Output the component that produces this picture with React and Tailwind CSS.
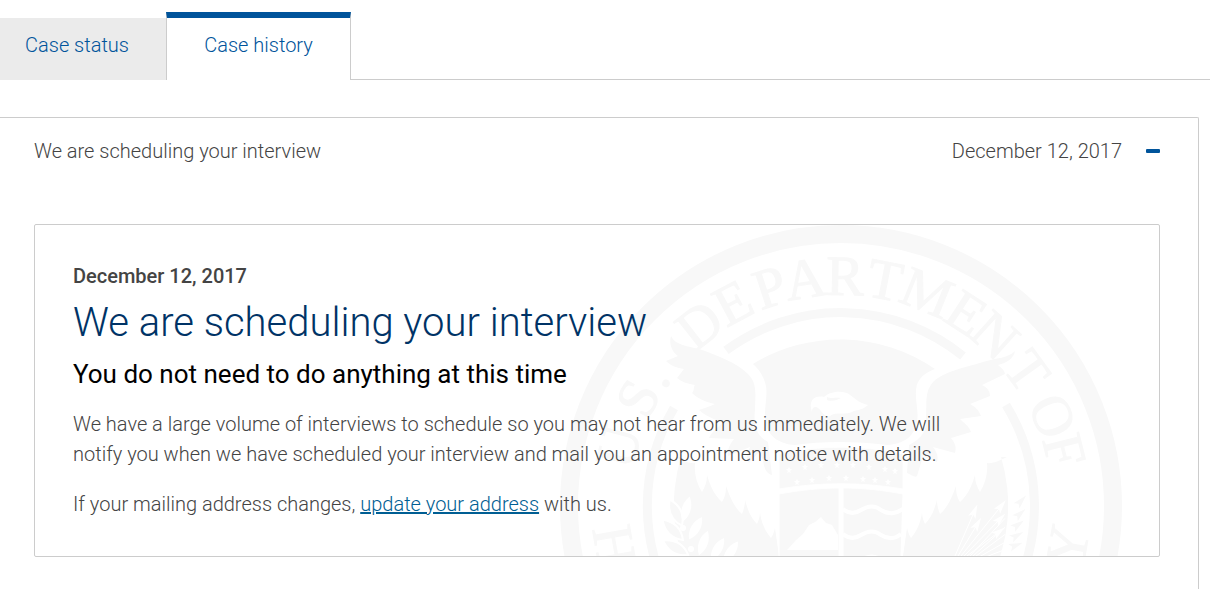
import React, { useState } from "react";

const tabs = ["Case status", "Case history"];

// letters around the rim, with the angle from the top
const topLetters = [
  ["U", -75],
  ["S", -62],
  [".", -55],
  ["D", -38],
  ["E", -28],
  ["P", -18],
  ["A", -9],
  ["R", 1],
  ["T", 11],
  ["M", 22],
  ["E", 33],
  ["N", 42],
  ["T", 54],
  ["O", 67],
  ["F", 76],
];

// these are read from the inside of the rim
const bottomLetters = [
  ["H", 80],
  ["Y", -80],
];

const stars = [
  [-52, -36], [-36, -39], [-20, -41], [-4, -41], [12, -41], [28, -39], [44, -37], [54, -35],
  [-44, -24], [-29, -26], [-12, -28], [5, -28], [22, -27], [34, -26], [47, -24],
];

const outerLeaves = [
  [-165, 7, -25],
  [-168, 24, -45],
  [-165, 42, -60],
];

const innerLeaves = [
  [-155, 4, 15],
  [-146, 23, 30],
  [-138, 38, 20],
  [-124, 44, 30],
  [-111, 47, 35],
];

const arrows = [
  [114, 50, 134, 4],
  [117, 50, 137, 17],
  [120, 50, 161, -1],
  [123, 50, 160, 12],
  [126, 50, 159, 25],
  [129, 50, 181, -6],
  [132, 50, 180, 7],
  [135, 50, 178, 18],
  [138, 51, 177, 29],
  [142, 52, 176, 39],
];

const lowerWing =
  "M-166 -49C-160 -46 -152 -42 -146 -43C-147 -32 -144 -22 -139 -14C-136 -19 -134 -24 -134 -31C-131 -20 -126 -10 -119 -4C-116 -9 -115 -13 -115 -20C-111 -9 -107 1 -99 8C-97 3 -96 -1 -96 -6C-93 5 -90 12 -84 18C-82 14 -81 10 -81 6C-80 16 -76 25 -70 32C-68 29 -67 26 -66 22L-62 50L-55 80V157A167 167 0 0 1 -160 -49Z";

function Seal() {
  return (
    <svg
      className="absolute top-0 right-[37px] w-[562px] h-[562px]"
      viewBox="-281 -281 562 562"
      fill="#f8f8f8"
      aria-hidden="true"
    >
      <circle r="272" fill="none" stroke="#f8f8f8" strokeWidth="18" />

      <g fontFamily="Liberation Serif, serif" fontSize="57" textAnchor="middle" stroke="#f8f8f8">
        {topLetters.map(([letter, angle]) => (
          <text key={angle} y="-211" transform={`rotate(${angle})`}>{letter}</text>
        ))}
        {bottomLetters.map(([letter, angle]) => (
          <text key={angle} y="249" transform={`rotate(${angle})`}>{letter}</text>
        ))}
      </g>

      {/* Inner ring, open where the wings pass */}
      <g fill="none" stroke="#f8f8f8" strokeWidth="9">
        <path d="M-115 -155.6A193.5 193.5 0 0 1 122 -150" />
        <path d="M-167 -98A193.5 193.5 0 0 0 0 193.5A193.5 193.5 0 0 0 165 -101" />
      </g>

      {/* Sky behind the head */}
      <path d="M-88 -142A167 167 0 0 1 94 -137C84 -133 76 -128 75 -116C74 -103 79 -92 75 -80C71 -67 60 -62 46 -61C16 -65 -20 -65 -46 -61C-60 -62 -72 -68 -75 -82C-78 -96 -73 -108 -75 -120C-77 -129 -82 -137 -88 -142Z" />

      {/* Head */}
      <path
        fill="#fff"
        d="M-29 -94C-33 -105 -27 -111 -17 -109C-13 -113 -4 -116 6 -113C13 -109 17 -103 27 -101C23 -97 17 -96 13 -95C5 -90 -5 -95 -11 -90C-18 -88 -20 -98 -25 -99C-28 -99 -29 -97 -29 -94Z"
      />
      <path d="M-14 -109C-9 -107 -5 -109 0 -108C-4 -106 -9 -104 -14 -106Z" />

      {/* Wings */}
      <path d="M-170 -170C-166 -161 -154 -160 -142 -157C-124 -151 -104 -143 -93 -132C-83 -122 -86 -110 -86 -96C-88 -80 -84 -70 -73 -64L-69 -31C-74 -32 -77 -37 -78 -46L-82 -54L-92 -43C-96 -49 -93 -54 -91 -59L-113 -50C-114 -58 -110 -63 -107 -67L-132 -68C-129 -75 -122 -79 -118 -84C-126 -86 -135 -90 -142 -96C-136 -98 -130 -100 -126 -102C-135 -104 -143 -107 -149 -113C-146 -116 -148 -119 -146 -121C-153 -122 -159 -124 -164 -128L-157 -137C-164 -138 -170 -140 -175 -145C-171 -147 -167 -148 -163 -150C-170 -155 -172 -163 -170 -170Z" />
      <path d="M174 -155C168 -148 155 -148 142 -144C122 -138 102 -134 92 -124C83 -114 86 -101 85 -89C86 -76 82 -68 68 -61L66 -33C71 -31 74 -28 76 -30L82 -50L96 -44C98 -50 95 -55 92 -59L114 -53C116 -60 113 -64 110 -68L130 -74C128 -80 123 -83 119 -87L140 -90C138 -96 133 -100 129 -102L149 -110C149 -116 145 -119 141 -121L164 -132C163 -137 159 -139 157 -141C166 -143 173 -148 174 -155Z" />

      {/* Lower half of the disc, cut by the feathers */}
      <path d={lowerWing} />
      <path d={lowerWing} transform="scale(-1 1)" />

      {/* Olive branch */}
      {outerLeaves.map(([x, y, angle]) => (
        <path
          key={`${x},${y}`}
          d="M0 14C-7 5 -7 -5 0 -15C7 -5 7 5 0 14Z"
          stroke="#fff"
          strokeWidth="2"
          transform={`translate(${x} ${y}) rotate(${angle})`}
        />
      ))}
      {innerLeaves.map(([x, y, angle]) => (
        <path
          key={`${x},${y}`}
          d="M0 12C-6 4 -6 -6 0 -14C6 -6 6 4 0 12Z"
          fill="#fff"
          transform={`translate(${x} ${y}) rotate(${angle})`}
        />
      ))}
      <g fill="#fff">
        <circle cx="-158" cy="22" r="3" />
        <circle cx="-150" cy="43" r="3" />
      </g>

      {/* Arrows, grey where they leave the disc */}
      {arrows.map(([x1, y1, x2, y2]) => (
        <g key={`${x2},${y2}`}>
          <line x1={x1} y1={y1} x2={Math.min(x2, 164)} y2={y2 + ((x2 - Math.min(x2, 164)) * (y1 - y2)) / (x2 - x1)} stroke="#fff" />
          <path
            d="M0 -6L4 8L0 5L-4 8Z"
            fill={x2 > 166 ? "#f8f8f8" : "#fff"}
            transform={`translate(${x2} ${y2}) rotate(${(Math.atan2(x2 - x1, y1 - y2) * 180) / Math.PI})`}
          />
        </g>
      ))}

      {/* Shield */}
      <path
        d="M-62 -52C-22 -61 22 -61 62 -52V-17C22 -24 -22 -24 -62 -17ZM-62 -12C-40 -16 -20 -18 -2 -18V120C-40 105 -60 80 -62 50ZM2 -18C22 -18 40 -16 62 -12L60 50C58 80 40 105 2 120Z"
        stroke="#fff"
        strokeWidth="1"
      />
      <g fill="#fff">
        {stars.map(([x, y]) => (
          <path
            key={`${x},${y}`}
            d="M0 -3L1 -1L3 -1L1 1L2 3L0 2L-2 3L-1 1L-3 -1L-1 -1Z"
            transform={`translate(${x} ${y})`}
          />
        ))}
        <path d="M-54 44L-45 34L-38 28L-32 19L-26 16L-20 11L-15 17L-9 19L-3 29V44Z" />
      </g>
      <g fill="none" stroke="#fff" strokeWidth="4">
        <path d="M2 3C8 8 14 8 20 4C28 -1 34 -1 40 4C48 9 54 8 62 3" />
        <path d="M2 28C8 33 14 33 20 29C28 24 34 24 40 29C48 34 54 33 60 28" />
        <path d="M2 53C8 58 14 58 20 54C28 49 34 49 40 54C48 59 54 58 60 53" />
      </g>
    </svg>
  );
}

export default function App() {
  const [activeTab, setActiveTab] = useState("Case history");
  const [open, setOpen] = useState(true);

  return (
    <div className="min-h-screen bg-white pt-3 overflow-hidden font-[Roboto,sans-serif] text-xl leading-[30px] font-light text-[#444]">
      <div role="tablist" className="flex items-end">
        {tabs.map((tab) => (
          <button
            key={tab}
            role="tab"
            aria-selected={activeTab === tab}
            onClick={() => setActiveTab(tab)}
            className={
              activeTab === tab
                ? "h-[68px] w-[185px] border-x border-x-[#ccc] border-t-6 border-t-[#00549b] pb-2 text-[#00549b]"
                : "h-[62px] w-[166px] bg-[#ebebeb] pr-3 pb-2 text-[#00549b]"
            }
          >
            {tab}
          </button>
        ))}
        <div className="flex-1 border-b border-[#ccc]" />
      </div>

      <section className="mt-[37px] mr-[11px] min-h-[500px] rounded-tr-xs border-t border-r border-[#ccc] pt-[18px] pr-[38px] pl-[34px]">
        <div className="flex items-center justify-between">
          <h2>We are scheduling your interview</h2>
          <div className="flex items-center gap-6">
            <span>December 12, 2017</span>
            <button
              aria-label={open ? "Collapse" : "Expand"}
              aria-expanded={open}
              onClick={() => setOpen(!open)}
              className="flex h-[30px] w-[14px] items-center"
            >
              <span className="h-1 w-full rounded-[1px] bg-[#00549b]" />
            </button>
          </div>
        </div>

        {open && (
          <article className="relative mt-[58px] overflow-hidden rounded-xs border border-[#ccc] px-[38px] pt-9 pb-[37px]">
            <Seal />
            <div className="relative max-w-[880px]">
              <p className="font-medium">December 12, 2017</p>
              <h1 className="mt-2 text-[40px] leading-[48px] text-[#003366]">
                We are scheduling your interview
              </h1>
              <h3 className="mt-3 text-[26px] leading-[30px] font-normal text-black">
                You do not need to do anything at this time
              </h3>
              <p className="mt-5">
                We have a large volume of interviews to schedule so you may not hear from us immediately. We will
                notify you when we have scheduled your interview and mail you an appointment notice with details.
              </p>
              <p className="mt-5">
                If your mailing address changes,{" "}
                <a href="#address" className="text-[#005e93] underline">update your address</a> with us.
              </p>
            </div>
          </article>
        )}
      </section>
    </div>
  );
}
